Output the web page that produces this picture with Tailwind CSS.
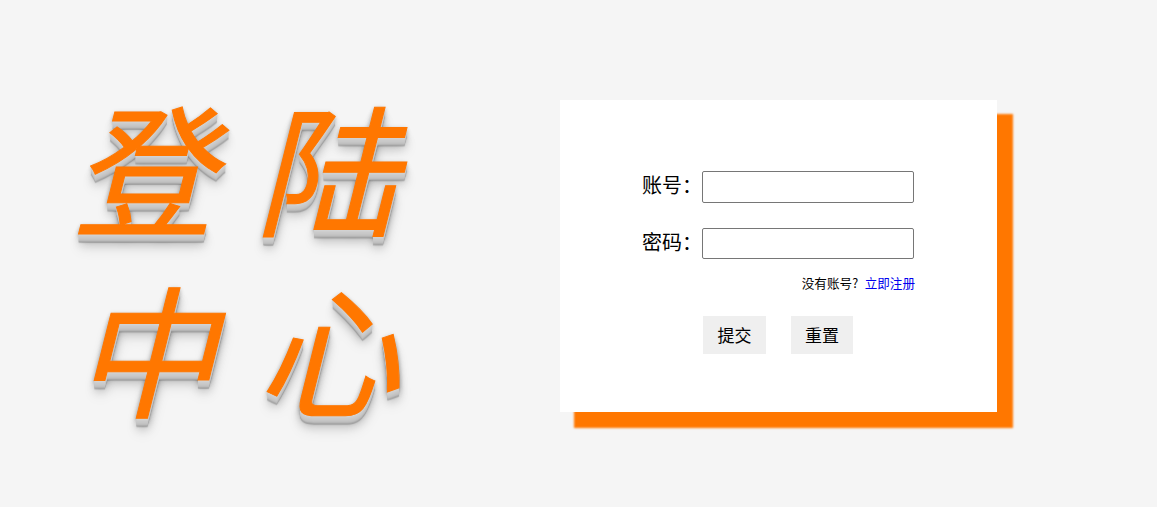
<!DOCTYPE html>
<html lang="zh-CN">
<head>
    <meta charset="utf-8" />
    <title>登陆</title>
    <script src="https://cdn.jsdelivr.net/npm/@tailwindcss/browser@4"></script>
</head>
<body class="bg-[#f5f5f5] h-[507px] overflow-hidden [font-family:'Noto_Sans_CJK_SC',sans-serif] text-black">
    <div class="flex h-full">
        <!-- big title -->
        <div class="w-[560px] pl-[72px] pt-[74px]">
            <div class="text-[142px] leading-[181px] italic font-normal [-webkit-text-stroke:1px_#ff7700] text-[#ff7700] tracking-[41px] whitespace-nowrap [text-shadow:0_1px_0_#d4d4d4,0_2px_0_#d0d0d0,0_3px_0_#ccc,0_4px_0_#c9c9c9,0_5px_0_#c6c6c6,0_6px_0_#c2c2c2,0_7px_0_#bbb,0_8px_0_#aaa,0_9px_1px_rgba(0,0,0,.2),0_0_5px_rgba(0,0,0,.1),0_2px_4px_rgba(0,0,0,.2),0_5px_6px_rgba(0,0,0,.2),0_10px_10px_rgba(0,0,0,.2),0_14px_14px_rgba(0,0,0,.1)]">
                <div>登陆</div>
                <div class="pl-[2px]">中心</div>
            </div>
        </div>

        <!-- login card -->
        <div class="mt-[100px] w-[437px] h-[312px] bg-white shadow-[15px_15px_2px_1px_#ff7700] pt-[71px]">
            <div class="flex items-center h-[32px]">
                <label class="w-[142px] text-right text-[20px] leading-none -translate-y-[2px]">账号：</label>
                <input type="text" class="w-[212px] h-[32px] border border-[#767676] rounded-[2px] bg-white" />
            </div>
            <div class="flex items-center h-[31px] mt-[25px]">
                <label class="w-[142px] text-right text-[20px] leading-none -translate-y-[2px]">密码：</label>
                <input type="password" class="w-[212px] h-[31px] border border-[#767676] rounded-[2px] bg-white" />
            </div>
            <div class="w-[355px] mt-[15px] text-right text-[12.6px] leading-[18px]">
                没有账号?<a href="#" class="ml-[6.5px] text-[#0000ee]">立即注册</a>
            </div>
            <div class="flex gap-[25px] pl-[143px] mt-[24px]">
                <button class="w-[63px] h-[38px] bg-[#efefef] text-[17px]">提交</button>
                <button class="w-[62px] h-[38px] bg-[#efefef] text-[17px]">重置</button>
            </div>
        </div>
    </div>
</body>
</html>
